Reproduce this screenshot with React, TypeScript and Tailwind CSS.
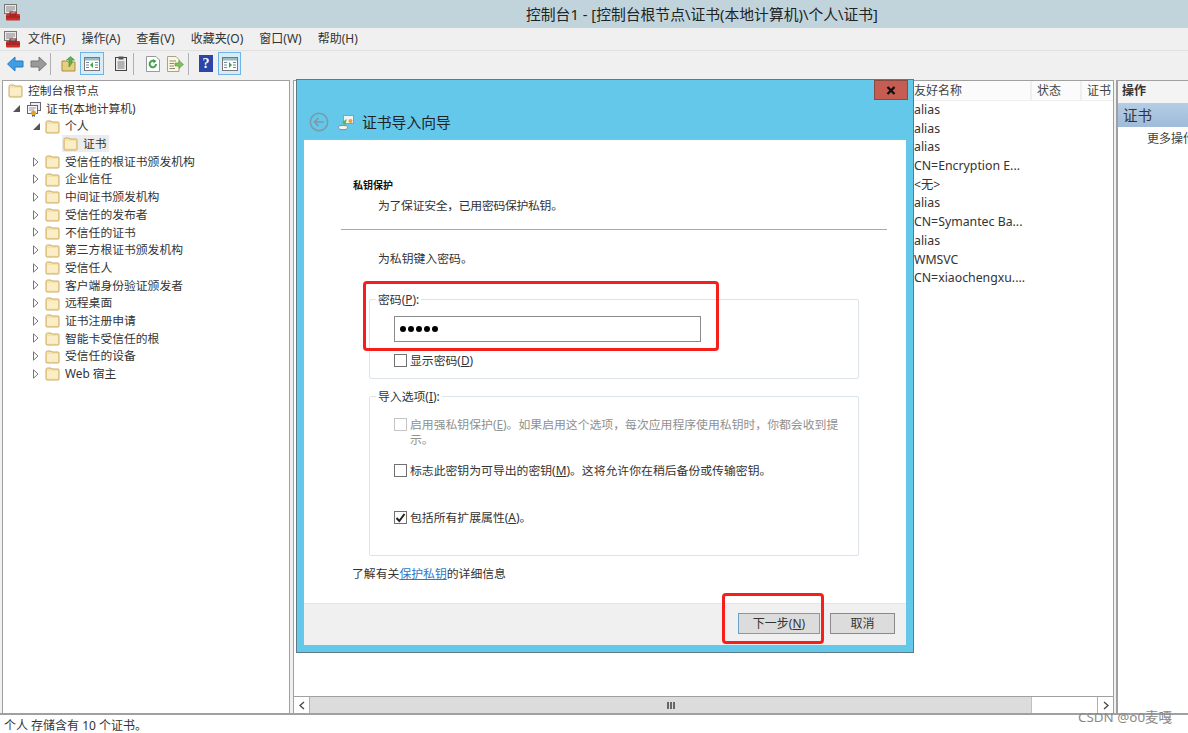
import React from 'react';

const Folder = ({ className = '' }: { className?: string }) => (
  <svg width="15" height="15" viewBox="0 0 15 15" className={className}>
    <path d="M1 3.5 Q1 2 2.5 2 H6 L7 3 H13 Q14 3 14 4 V13 Q14 14 13 14 H2 Q1 14 1 13 Z" fill="#f7e3a6" stroke="#c9ac6a" strokeWidth="1" />
    <path d="M2 5 H13 V12.5 H2 Z" fill="#fbeec6" />
  </svg>
);

const Closed = () => (
  <svg width="6" height="10" viewBox="0 0 6 10"><path d="M0.5 0.8 L5 5 L0.5 9.2 Z" fill="#fff" stroke="#777" strokeWidth="1" /></svg>
);

const Open = () => (
  <svg width="7" height="7" viewBox="0 0 7 7"><path d="M7 0 V7 H0 Z" fill="#555" /></svg>
);

const AppIcon = () => (
  <svg width="17" height="17" viewBox="0 0 17 17">
    <rect x="0.5" y="0.5" width="12" height="9" fill="#e8e8e8" stroke="#777" />
    <path d="M2 3 H11 M2 5 H11 M2 7 H9" stroke="#888" strokeWidth="1" />
    <rect x="2" y="10" width="14" height="6.5" rx="1" fill="#c8302c" />
    <rect x="6" y="8" width="6" height="3" fill="none" stroke="#8e1d1a" />
    <path d="M2 13 H16" stroke="#8e1d1a" />
  </svg>
);

const Sep = () => <div className="w-px h-[22px] bg-[#b0b0b0]" />;

const Toolbar = () => (
  <div className="h-[29px] bg-[#f0f0f0] flex items-center pl-[7px] pb-[4px] shrink-0">
    <svg width="17" height="16" viewBox="0 0 17 16"><path d="M0.5 8 L8 1 V5 H16 V11 H8 V15 Z" fill="#3f9fe6" stroke="#2a78c0" /></svg>
    <svg width="17" height="16" viewBox="0 0 17 16" className="ml-[6px]"><path d="M16.5 8 L9 1 V5 H1 V11 H9 V15 Z" fill="#999" stroke="#777" /></svg>
    <div className="ml-[3px]"><Sep /></div>
    <svg width="16" height="16" viewBox="0 0 16 16" className="ml-[10px]">
      <path d="M1 5 H6 L7 6 H14 V15 H1 Z" fill="#e8cf7e" stroke="#a88f44" />
      <path d="M8 11 V4 H5.5 L9.5 0.5 L13.5 4 H11 V7 Z" fill="#5cb54a" stroke="#3a8a30" strokeWidth="0.6" />
    </svg>
    <div className="ml-[3px] w-[24px] h-[23px] bg-[#d8ebf7] border border-[#6cb4e4] flex items-center justify-center">
      <svg width="16" height="14" viewBox="0 0 16 14">
        <rect x="0.5" y="0.5" width="15" height="13" fill="#fff" stroke="#777" />
        <rect x="1" y="1" width="14" height="2.5" fill="#9bb" />
        <path d="M2 5.5 H5 M2 8 H5 M2 10.5 H5 M11 5.5 H14 M11 8 H14 M11 10.5 H14" stroke="#6a8aa0" />
        <path d="M9 5 V11 L6 8 Z" fill="#3fa34a" />
      </svg>
    </div>
    <svg width="12" height="15" viewBox="0 0 12 15" className="ml-[11px]">
      <rect x="0.5" y="1.5" width="11" height="13" fill="#eee" stroke="#444" />
      <rect x="3.5" y="0.5" width="5" height="3" fill="#555" />
      <path d="M2.5 6 H9.5 M2.5 8 H9.5 M2.5 10 H9.5 M2.5 12 H9.5" stroke="#777" />
    </svg>
    <div className="ml-[6px]"><Sep /></div>
    <svg width="14" height="16" viewBox="0 0 14 16" className="ml-[12px]">
      <path d="M0.5 0.5 H10 L13.5 4 V15.5 H0.5 Z" fill="#fff" stroke="#999" />
      <path d="M10 8 A3.2 3.2 0 1 1 8.5 5.3" fill="none" stroke="#3fa34a" strokeWidth="2" />
      <path d="M7 3 L10.5 5 L7.5 7.5 Z" fill="#3fa34a" />
    </svg>
    <svg width="17" height="16" viewBox="0 0 17 16" className="ml-[7px]">
      <path d="M0.5 0.5 H9 L12 3.5 V15.5 H0.5 Z" fill="#fdf6dc" stroke="#a9a38a" />
      <path d="M2.5 5 H9 M2.5 7.5 H7 M2.5 10 H7 M2.5 12.5 H8" stroke="#8a8a7a" />
      <path d="M8 7 H12 V4.5 L16.5 8.5 L12 12.5 V10 H8 Z" fill="#7cc35a" stroke="#4f9a3a" strokeWidth="0.6" />
    </svg>
    <div className="ml-[4px]"><Sep /></div>
    <div className="ml-[10px] w-[14px] h-[17px] bg-[#2b45a8] text-white text-[14px] leading-[17px] font-bold text-center font-['Liberation_Serif',serif]">?</div>
    <div className="ml-[5px] w-[23px] h-[23px] bg-[#d8ebf7] border border-[#6cb4e4] flex items-center justify-center">
      <svg width="16" height="14" viewBox="0 0 16 14">
        <rect x="0.5" y="0.5" width="15" height="13" fill="#fff" stroke="#777" />
        <rect x="1" y="1" width="14" height="2.5" fill="#9bb" />
        <path d="M2 5.5 H5 M2 8 H5 M2 10.5 H5 M11 5.5 H14 M11 8 H14 M11 10.5 H14" stroke="#6a8aa0" />
        <path d="M7 5 V11 L10 8 Z" fill="#3fa34a" />
      </svg>
    </div>
  </div>
);

const treeRows = ['受信任的根证书颁发机构', '企业信任', '中间证书颁发机构', '受信任的发布者', '不信任的证书', '第三方根证书颁发机构', '受信任人', '客户端身份验证颁发者', '远程桌面', '证书注册申请', '智能卡受信任的根', '受信任的设备', 'Web 宿主'];

const Row = ({ indent, arrow, label, selected }: { indent: string; arrow?: React.ReactNode; label: string; selected?: boolean }) => (
  <div className={`h-[17.7px] flex items-center ${indent}`}>
    <div className="w-[12px] flex items-center justify-start shrink-0">{arrow}</div>
    <div className={`flex items-center gap-[4px] ${selected ? 'bg-[#ececec] pr-[2px] pl-px h-[17px]' : ''}`}>
      <Folder />
      <span className="ml-px whitespace-nowrap">{label}</span>
    </div>
  </div>
);

const Tree = () => (
  <div className="w-[288px] ml-[2px] bg-white border border-[#a0a0a0] pt-[1px] text-[11.8px] text-[#333] shrink-0 overflow-hidden">
    <div className="h-[17.7px] flex items-center pl-[5px] gap-[5px]"><Folder /><span>控制台根节点</span></div>
    <div className="h-[17.7px] flex items-center pl-[10px]">
      <div className="w-[13px]"><Open /></div>
      <svg width="16" height="16" viewBox="0 0 16 16" className="mr-[4px]">
        <rect x="4.5" y="1.5" width="10" height="8" fill="#eee" stroke="#667" />
        <rect x="1.5" y="4.5" width="10" height="8" fill="#f6f6f6" stroke="#667" />
        <path d="M3 7 H10 M3 9 H8" stroke="#99a" />
        <circle cx="7.5" cy="12" r="2.5" fill="#e2a32b" />
        <path d="M6 14 V16 L7.5 15 L9 16 V14" fill="#3a6fc0" />
      </svg>
      <span>证书(本地计算机)</span>
    </div>
    <Row indent="pl-[30px]" arrow={<Open />} label="个人" />
    <Row indent="pl-[47px]" label="证书" selected />
    {treeRows.map((r) => <Row key={r} indent="pl-[30px]" arrow={<Closed />} label={r} />)}
  </div>
);

const names = ['alias', 'alias', 'alias', 'CN=Encryption E...', '<无>', 'alias', 'CN=Symantec Ba...', 'alias', 'WMSVC', 'CN=xiaochengxu....'];

const ListPane = () => (
  <div className="flex-1 ml-[3px] bg-white border border-[#a0a0a0] flex flex-col min-w-0">
    <div className="flex-1 flex flex-col items-end min-h-0">
      <div className="w-[200px] h-[20px] flex text-[12px] text-[#444] bg-[#fbfbfb] border-b border-[#eeeeee]">
        <div className="w-[119px] pl-px leading-[20px] border-r-2 border-[#eeeeee]">友好名称</div>
        <div className="w-[50px] pl-[5px] leading-[20px] border-r-2 border-[#eeeeee]">状态</div>
        <div className="flex-1 pl-[5px] leading-[20px] overflow-hidden whitespace-nowrap">证书</div>
      </div>
      <div className="w-[200px] text-[12.3px] text-[#333]">
        {names.map((n, i) => <div key={i} className="h-[18.7px] leading-[18.7px] pl-px whitespace-nowrap">{n}</div>)}
      </div>
    </div>
    <div className="h-[17px] flex border-t border-[#a0a0a0] items-stretch">
      <div className="w-[16px] flex items-center justify-center border-r border-[#b0b0b0]">
        <svg width="6" height="9" viewBox="0 0 6 9"><path d="M5 1 L1 4.5 L5 8" fill="none" stroke="#444" strokeWidth="1.3" /></svg>
      </div>
      <div className="w-[722px] bg-[#dcdcdc] flex items-center justify-center border-r border-[#c0c0c0]">
        <div className="w-[8px] h-[7px] border-x-2 border-[#666] relative after:absolute after:left-[1px] after:w-[2px] after:h-[7px] after:bg-[#666]" />
      </div>
      <div className="flex-1" />
      <div className="w-[16px] flex items-center justify-center border-l border-[#b0b0b0]">
        <svg width="6" height="9" viewBox="0 0 6 9"><path d="M1 1 L5 4.5 L1 8" fill="none" stroke="#444" strokeWidth="1.3" /></svg>
      </div>
    </div>
  </div>
);

const ActionPane = () => (
  <div className="w-[72px] ml-[2px] bg-white border-l-2 border-y border-[#a0a0a0] shrink-0 overflow-hidden text-[12px] whitespace-nowrap">
    <div className="h-[22px] leading-[20px] pl-[4px] font-bold text-[#333] bg-[#f4f4f4]">操作</div>
    <div className="h-[24px] leading-[24px] pl-[5px] text-[14.5px] text-[#333] bg-gradient-to-b from-[#b5cde6] to-[#9fbbd8]">证书</div>
    <div className="pl-[29px] mt-[3px] text-[#444]">更多操作</div>
  </div>
);

const Check = ({ checked, disabled }: { checked?: boolean; disabled?: boolean }) => (
  <span className={`w-[13px] h-[13px] border shrink-0 bg-white flex items-center justify-center ${disabled ? 'border-[#c4c4c4]' : 'border-[#707070]'}`}>
    {checked && <svg width="11" height="11" viewBox="0 0 11 11"><path d="M1.5 6 L4.3 9 L9.5 2" fill="none" stroke="#222" strokeWidth="2" /></svg>}
  </span>
);

const Wizard = () => (
  <div className="absolute left-[296px] top-[79px] w-[618px] h-[574px] bg-[#63c8ea] border border-[#5d7a88] px-[7px] pb-[7px] flex flex-col text-[11.85px] text-[#333]">
    <div className="h-[59px] relative shrink-0">
      <div className="absolute right-[-2px] top-0 w-[34px] h-[20px] bg-[#c65d52] border border-[#8a4a44] flex items-center justify-center">
        <svg width="10" height="9" viewBox="0 0 10 9"><path d="M1.5 1 L8.5 8 M8.5 1 L1.5 8" stroke="#111" strokeWidth="2.4" /></svg>
      </div>
      <div className="absolute left-[5px] top-[32px] flex items-center">
        <svg width="20" height="20" viewBox="0 0 20 20">
          <circle cx="10" cy="10" r="8.7" fill="none" stroke="#7d99a5" strokeWidth="1.5" />
          <path d="M15 10 H6 M9.5 6 L5.5 10 L9.5 14" fill="none" stroke="#7d99a5" strokeWidth="1.6" />
        </svg>
        <svg width="17" height="17" viewBox="0 0 17 17" className="ml-[9px]">
          <rect x="5.5" y="1.5" width="10" height="8" fill="#f2f2f2" stroke="#9a9a9a" />
          <path d="M4 8 L9 5 L7 11 Z" fill="#5cb54a" />
          <circle cx="12.5" cy="7" r="2" fill="#e6a52c" />
          <ellipse cx="5" cy="13.5" rx="4.5" ry="2.2" fill="#f4f4f4" stroke="#888" />
        </svg>
        <span className="ml-[7px] text-[14.8px] leading-[20px] text-[#222]">证书导入向导</span>
      </div>
    </div>
    <div className="flex-1 bg-white border-t border-[#9ab7c4] flex flex-col min-h-0">
      <div className="flex-1 pl-[37px] pr-[19px] pt-[38px] min-h-0">
        <div className="pl-[12px] text-[10px] leading-[14px] font-bold text-[#111]">私钥保护</div>
        <div className="pl-[37px] mt-[5px] leading-[17px] tracking-[-0.3px]">为了保证安全，已用密码保护私钥。</div>
        <div className="h-px bg-[#a8a8a8] mt-[15px]" />
        <div className="pl-[37px] mt-[20px] leading-[17px]">为私钥键入密码。</div>
        <fieldset className="ml-[28px] mr-[28px] mt-[25px] h-[87px] border border-[#dce3ea] rounded-[2px] pl-[24px] pr-[157px]">
          <legend className="-ml-[18px] px-[2px] leading-[14px]"><span>密码(<u>P</u>):</span></legend>
          <div className="mt-[10px] h-[26px] border border-[#8a8a8a] flex items-center pl-[5px] gap-[2px]">
            {[0, 1, 2, 3, 4].map((i) => <span key={i} className="w-[6px] h-[6px] rounded-full bg-black" />)}
          </div>
          <label className="flex items-center gap-[3px] mt-[11px] leading-[14px]"><Check /><span>显示密码(<u>D</u>)</span></label>
        </fieldset>
        <fieldset className="ml-[28px] mr-[28px] mt-[10px] h-[167px] border border-[#dce3ea] rounded-[2px] pl-[24px] pr-[15px]">
          <legend className="-ml-[18px] px-[2px] leading-[14px]">导入选项(<u>I</u>):</legend>
          <div className="flex gap-[3px] mt-[14px] text-[#909090] leading-[15px]">
            <span className="mt-px"><Check disabled /></span>
            <span>启用强私钥保护(<u>E</u>)。如果启用这个选项，每次应用程序使用私钥时，你都会收到提示。</span>
          </div>
          <label className="flex items-center gap-[3px] mt-[15px] leading-[17px]"><Check /><span>标志此密钥为可导出的密钥(<u>M</u>)。这将允许你在稍后备份或传输密钥。</span></label>
          <label className="flex items-center gap-[3px] mt-[30px] leading-[17px]"><Check checked /><span>包括所有扩展属性(<u>A</u>)。</span></label>
        </fieldset>
        <div className="ml-[11px] mt-[9px] leading-[17px]">了解有关<a className="text-[#2b79c9] underline">保护私钥</a>的详细信息</div>
      </div>
      <div className="h-[42px] bg-[#f0f0f0] border-t border-[#e4e4e4] flex items-center justify-end pr-[11px] pb-[2px] gap-[10px] shrink-0">
        <button className="w-[82px] h-[21px] bg-[#dcdcdc] border border-[#6e9fc4] text-[12px] leading-[19px] text-[#333]">下一步(<u>N</u>)</button>
        <button className="w-[65px] h-[21px] bg-[#dcdcdc] border border-[#8a8a8a] text-[12px] leading-[19px] text-[#333]">取消</button>
      </div>
    </div>
  </div>
);

export default function App() {
  return (
    <div className="w-[1188px] h-[733px] relative overflow-hidden flex flex-col bg-[#f0f0f0] font-['Noto_Sans','Noto_Sans_CJK_SC',sans-serif]">
      <div className="h-[28px] bg-[#c1d4db] relative shrink-0 pl-[4px] pt-[4px]">
        <AppIcon />
        <div className="absolute left-[526px] top-0 leading-[28px] text-[14.8px] text-[#222] whitespace-nowrap">控制台1 - [控制台根节点\证书(本地计算机)\个人\证书]</div>
      </div>
      <div className="h-[23px] bg-[#f0f0f0] border-b border-[#e0e0e0] flex items-center pl-[4px] text-[12px] text-[#333] shrink-0">
        <AppIcon />
        <div className="flex ml-[7px] gap-[16px] whitespace-nowrap">
          <span>文件(F)</span><span>操作(A)</span><span>查看(V)</span><span>收藏夹(O)</span><span>窗口(W)</span><span>帮助(H)</span>
        </div>
      </div>
      <Toolbar />
      <div className="h-[634px] flex shrink-0">
        <Tree />
        <ListPane />
        <ActionPane />
      </div>
      <div className="flex-1 bg-white border-t-2 border-[#a0a0a0] text-[12px] text-[#333] pl-[4px] leading-[22px] -mt-px">个人 存储含有 10 个证书。</div>
      <Wizard />
      <div className="absolute left-[363px] top-[281px] w-[356px] h-[70px] border-[3px] border-[#f5201c] rounded-[4px]" />
      <div className="absolute left-[722px] top-[593px] w-[102px] h-[51px] border-[3px] border-[#f5201c] rounded-[4px]" />
      <div className="absolute left-[1078px] top-[709px] text-[13.4px] leading-[16px] text-[#8a8a8a] whitespace-nowrap">CSDN @o0麦嘎</div>
    </div>
  );
}
